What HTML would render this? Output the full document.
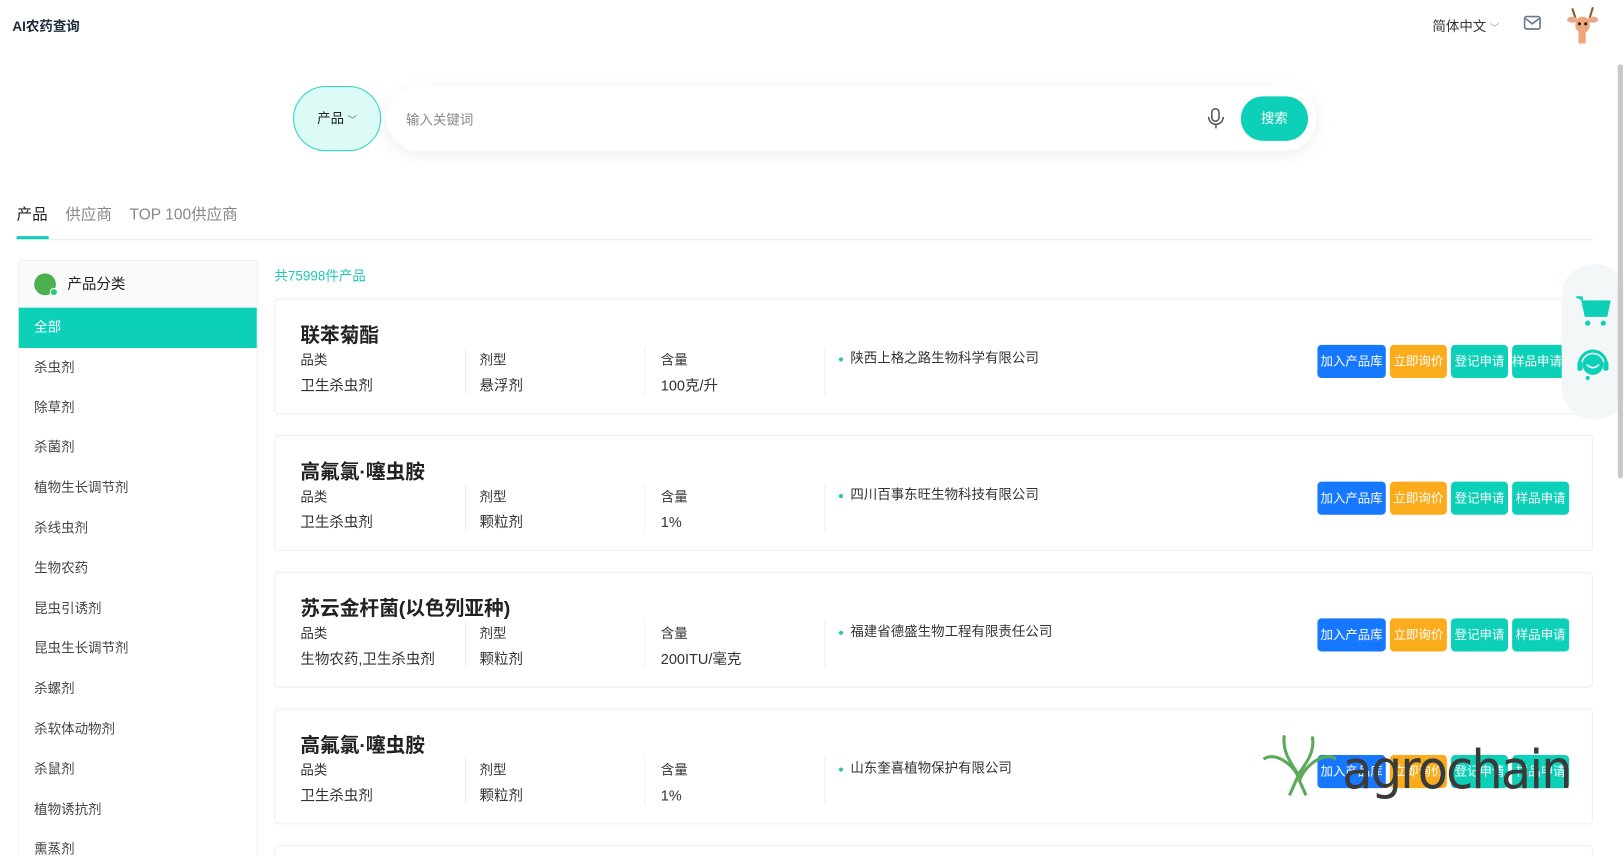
<!DOCTYPE html>
<html style="width:1624px;height:856px;overflow:hidden"><head><meta charset="utf-8"><style>
*{box-sizing:border-box;margin:0;padding:0}
body{width:1624px;height:856px;overflow:hidden;background:#fff;font-family:"Liberation Sans","Noto Sans CJK SC",sans-serif;color:#333}
.wrap{position:relative;width:1568px;height:827px;transform:scale(1.03571);transform-origin:0 0;overflow:hidden}
.abs{position:absolute}
.logo{left:12px;top:15px;font-size:13px;font-weight:bold;color:#1a2a3a}
.lang{left:1383px;top:15px;font-size:13px;color:#333}
.search{left:373px;top:83px;width:898px;height:63px;border-radius:32px;background:#fff;box-shadow:0 4px 16px rgba(0,80,70,.08)}
.sel{left:283px;top:83px;width:85px;height:63px;border-radius:32px;background:#dcfaf6;border:1px solid #2dd4c4;font-size:13px;color:#222;text-align:center;line-height:61px}
.btn{left:1198px;top:93px;width:65px;height:43px;border-radius:22px;background:#0dd0b8;color:#fff;font-size:13px;text-align:center;line-height:43px}
.tabs{left:16px;top:196px;font-size:15px;color:#888}
.tabs span{margin-right:17px}
.side{left:17px;top:251px;width:232px;height:605px;border:1px solid #f0f0f0;border-radius:4px;background:#fff;overflow:hidden}
.sh{height:45px;background:#fafafa;font-size:14px;color:#222;line-height:45px;padding-left:47px;position:relative}
.sh i{position:absolute;left:15px;top:12px;width:21px;height:21px;border-radius:50%;background:#4caf50}
.sh i:after{content:"";position:absolute;right:-2px;bottom:-1px;width:6px;height:6px;border-radius:50%;background:#2ecc71;border:1px solid #fff}
.item{height:38.8px;line-height:38.8px;padding-left:15px;font-size:13px;color:#444}
.item.on{background:#0dd0b8;color:#fff}
.count{left:265px;top:256px;font-size:13px;color:#1ec8b4}
.card{left:265px;width:1273px;height:112px;border:1px solid #eee;border-radius:4px;background:#fff}
.t{position:absolute;left:24px;top:20px;font-size:19px;font-weight:bold;color:#222}
.c{position:absolute;top:46px;font-size:13px;color:#333;line-height:25px}
.c div+div{font-size:14px}
.dv{position:absolute;top:46px;width:1px;height:46px;background:#eee}
.co{position:absolute;left:544px;top:46px;font-size:13px;color:#333}
.co:before{content:"";display:inline-block;width:4px;height:4px;border-radius:50%;background:#1ec8b4;margin-right:7px;vertical-align:middle}
.b{position:absolute;top:44px;height:32px;border-radius:4px;color:#fff;font-size:12px;line-height:32px;text-align:center;white-space:nowrap;overflow:hidden}
</style></head><body><div class="wrap">
<div class="abs logo">AI农药查询</div>
<div class="abs lang">简体中文 <span style="font-size:9px;color:#999">﹀</span></div>
<svg class="abs" style="left:1471px;top:15px" width="17" height="14"><rect x="1" y="1" width="15" height="12" rx="2" fill="none" stroke="#6b7a8d" stroke-width="1.6"/><path d="M2 3l6.5 5L15 3" fill="none" stroke="#6b7a8d" stroke-width="1.6"/></svg>
<svg class="abs" style="left:1510px;top:4px" width="36" height="40"><path d="M12 16L8 4M24 16L28 3" stroke="#8b5a2b" stroke-width="2"/><ellipse cx="8" cy="15" rx="5" ry="3" fill="#e9a88c"/><ellipse cx="28" cy="15" rx="5" ry="3" fill="#e9a88c"/><ellipse cx="18" cy="20" rx="7" ry="8" fill="#efa57a"/><rect x="14" y="25" width="7" height="13" fill="#efa57a"/><circle cx="15" cy="19" r="1.5" fill="#222"/><circle cx="21" cy="19" r="1.5" fill="#222"/></svg>
<div class="abs sel">产品 <span style="font-size:9px;color:#666">﹀</span></div>
<div class="abs search"><span style="position:absolute;left:19px;top:22px;font-size:13px;color:#888">输入关键词</span>
<svg style="position:absolute;left:792px;top:20px" width="18" height="22"><rect x="5" y="2" width="7" height="12" rx="3.5" fill="none" stroke="#555" stroke-width="1.5"/><path d="M2 10a7 7 0 0 0 14 0M9 17v4" fill="none" stroke="#555" stroke-width="1.5"/></svg></div>
<div class="abs btn">搜索</div>
<div class="abs tabs"><span style="color:#222">产品</span><span>供应商</span><span>TOP 100供应商</span></div>
<div class="abs" style="left:16px;top:228px;width:31px;height:3px;background:#0dd0b8"></div>
<div class="abs" style="left:16px;top:231px;width:1522px;height:1px;background:#e8e8e8"></div>
<div class="abs side"><div class="sh"><i></i>产品分类</div>
<div class="item on">全部</div><div class="item">杀虫剂</div><div class="item">除草剂</div><div class="item">杀菌剂</div><div class="item">植物生长调节剂</div><div class="item">杀线虫剂</div><div class="item">生物农药</div><div class="item">昆虫引诱剂</div><div class="item">昆虫生长调节剂</div><div class="item">杀螺剂</div><div class="item">杀软体动物剂</div><div class="item">杀鼠剂</div><div class="item">植物诱抗剂</div><div class="item">熏蒸剂</div></div>
<div class="abs count">共75998件产品</div>

<div class="abs card" style="top:288px"><div class="t">联苯菊酯</div>
<div class="c" style="left:24px"><div>品类</div><div>卫生杀虫剂</div></div><div class="dv" style="left:183px"></div>
<div class="c" style="left:197px"><div>剂型</div><div>悬浮剂</div></div><div class="dv" style="left:356px"></div>
<div class="c" style="left:372px"><div>含量</div><div>100克/升</div></div><div class="dv" style="left:530px"></div>
<div class="co">陕西上格之路生物科学有限公司</div>
<div class="b" style="left:1006px;width:66px;background:#1677ff">加入产品库</div><div class="b" style="left:1076px;width:55px;background:#fbac1c">立即询价</div><div class="b" style="left:1135px;width:55px;background:#0dd0b8">登记申请</div><div class="b" style="left:1194px;width:48px;border-radius:4px 0 0 4px;background:#0dd0b8">样品申请</div></div>

<div class="abs card" style="top:420px"><div class="t">高氟氯·噻虫胺</div>
<div class="c" style="left:24px"><div>品类</div><div>卫生杀虫剂</div></div><div class="dv" style="left:183px"></div>
<div class="c" style="left:197px"><div>剂型</div><div>颗粒剂</div></div><div class="dv" style="left:356px"></div>
<div class="c" style="left:372px"><div>含量</div><div>1%</div></div><div class="dv" style="left:530px"></div>
<div class="co">四川百事东旺生物科技有限公司</div>
<div class="b" style="left:1006px;width:66px;background:#1677ff">加入产品库</div><div class="b" style="left:1076px;width:55px;background:#fbac1c">立即询价</div><div class="b" style="left:1135px;width:55px;background:#0dd0b8">登记申请</div><div class="b" style="left:1194px;width:55px;background:#0dd0b8">样品申请</div></div>

<div class="abs card" style="top:552px"><div class="t">苏云金杆菌(以色列亚种)</div>
<div class="c" style="left:24px"><div>品类</div><div>生物农药,卫生杀虫剂</div></div><div class="dv" style="left:183px"></div>
<div class="c" style="left:197px"><div>剂型</div><div>颗粒剂</div></div><div class="dv" style="left:356px"></div>
<div class="c" style="left:372px"><div>含量</div><div>200ITU/毫克</div></div><div class="dv" style="left:530px"></div>
<div class="co">福建省德盛生物工程有限责任公司</div>
<div class="b" style="left:1006px;width:66px;background:#1677ff">加入产品库</div><div class="b" style="left:1076px;width:55px;background:#fbac1c">立即询价</div><div class="b" style="left:1135px;width:55px;background:#0dd0b8">登记申请</div><div class="b" style="left:1194px;width:55px;background:#0dd0b8">样品申请</div></div>

<div class="abs card" style="top:684px"><div class="t">高氟氯·噻虫胺</div>
<div class="c" style="left:24px"><div>品类</div><div>卫生杀虫剂</div></div><div class="dv" style="left:183px"></div>
<div class="c" style="left:197px"><div>剂型</div><div>颗粒剂</div></div><div class="dv" style="left:356px"></div>
<div class="c" style="left:372px"><div>含量</div><div>1%</div></div><div class="dv" style="left:530px"></div>
<div class="co">山东奎喜植物保护有限公司</div>
<div class="b" style="left:1006px;width:66px;background:#1677ff">加入产品库</div><div class="b" style="left:1076px;width:55px;background:#fbac1c">立即询价</div><div class="b" style="left:1135px;width:55px;background:#0dd0b8">登记申请</div><div class="b" style="left:1194px;width:55px;background:#0dd0b8">样品申请</div></div>
<div class="abs card" style="top:816px;height:40px;border-bottom:none;border-radius:4px 4px 0 0"></div>

<svg class="abs" style="left:1215px;top:708px" width="90" height="65"><path d="M25 2c-2 15 5 25 15 40M52 3c3 14-5 25-15 39M5 25c10-8 30 5 35 20M75 25c-10-8-30 5-35 20M38 42l-8 18M38 42l8 18" fill="none" stroke="#5aaa5a" stroke-width="3"/></svg>
<div class="abs" style="left:1296px;top:714px;font-size:52px;color:#3a3a3a;font-family:'DejaVu Sans',sans-serif;line-height:60px;letter-spacing:-2px;transform:scaleX(0.92);transform-origin:left">agrochain</div>

<div class="abs" style="left:1508px;top:255px;width:62px;height:150px;border-radius:30px;background:#f4f7f8"></div>
<svg class="abs" style="left:1521px;top:284px" width="34" height="32"><path d="M1 3h5l4 18h20l3-14H8" fill="#0dd0b8" stroke="#0dd0b8" stroke-width="2"/><circle cx="12" cy="28" r="2.5" fill="#0dd0b8"/><circle cx="27" cy="28" r="2.5" fill="#0dd0b8"/></svg>
<svg class="abs" style="left:1522px;top:334px" width="32" height="34"><path d="M3 18a13 13 0 0 1 26 0" fill="none" stroke="#0dd0b8" stroke-width="3"/><circle cx="16" cy="18" r="10" fill="#0dd0b8"/><path d="M10 18q6 6 12 0" fill="none" stroke="#fff" stroke-width="1.5"/><rect x="1" y="15" width="5" height="9" rx="2" fill="#0dd0b8"/><rect x="26" y="15" width="5" height="9" rx="2" fill="#0dd0b8"/><circle cx="11" cy="31" r="2" fill="#0dd0b8"/></svg>
<div class="abs" style="left:1562px;top:62px;width:5px;height:400px;border-radius:3px;background:#c8c8c8"></div>
</div></body></html>
